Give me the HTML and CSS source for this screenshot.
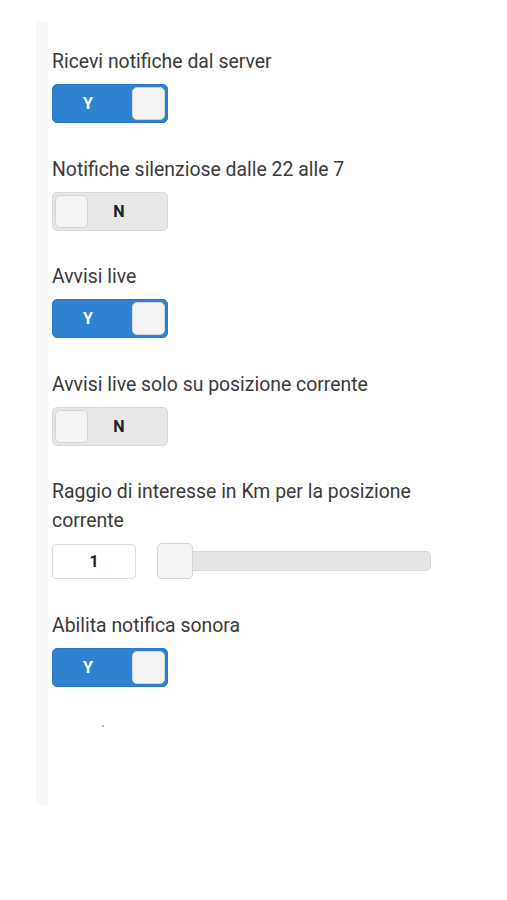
FILE: index.html
```html
<!DOCTYPE html>
<html lang="it">
<head>
<meta charset="utf-8">
<title>Impostazioni notifiche</title>
<link rel="stylesheet" href="styles.css">
</head>
<body>
<div class="page">
  <div class="rail"></div>
  <div class="content">
    <div class="field">
      <div class="label">Ricevi notifiche dal server</div>
      <div class="toggle on"><span class="txt">Y</span><span class="knob"></span></div>
    </div>
    <div class="field">
      <div class="label">Notifiche silenziose dalle 22 alle 7</div>
      <div class="toggle off"><span class="knob"></span><span class="txt">N</span></div>
    </div>
    <div class="field">
      <div class="label">Avvisi live</div>
      <div class="toggle on"><span class="txt">Y</span><span class="knob"></span></div>
    </div>
    <div class="field">
      <div class="label">Avvisi live solo su posizione corrente</div>
      <div class="toggle off"><span class="knob"></span><span class="txt">N</span></div>
    </div>
    <div class="field">
      <div class="label">Raggio di interesse in Km per la posizione corrente</div>
      <div class="range-row">
        <div class="num">1</div>
        <div class="slider"><div class="track"></div><div class="handle"></div></div>
      </div>
    </div>
    <div class="field">
      <div class="label">Abilita notifica sonora</div>
      <div class="toggle on"><span class="txt">Y</span><span class="knob"></span></div>
    </div>
    <div class="dot"></div>
  </div>
</div>
</body>
</html>
```
FILE: styles.css
```css
* { box-sizing: border-box; }
html, body { margin: 0; padding: 0; background: #fff; }
body { font-family: Roboto, "Noto Sans", sans-serif; color: #3a3a3a; }
.page { display: flex; padding: 22px 0 0 36px; }
.rail { width: 12px; height: 783px; background: #f7f7f7; flex: none; }
.content { padding: 25px 0 0 4px; width: 390px; }
.field { display: flex; flex-direction: column; align-items: flex-start; margin-bottom: 31.5px; }
.label { font-size: 19.4px; line-height: 29px; margin-bottom: 8px; width: 380px; }
.toggle { width: 116px; height: 39px; border-radius: 5px; display: flex; align-items: center; padding: 2px; font-weight: 700; font-size: 16px; }
.toggle.on { background: #2e82cf; border: 1px solid #2a76c0; color: #fff; }
.toggle.off { background: #e8e8e8; border: 1px solid #d8d8d8; color: #222; }
.knob { width: 33px; height: 33px; background: #f4f4f4; border: 1px solid #d4d4d4; border-radius: 5px; flex: none; }
.toggle.on .txt { width: 66px; text-align: center; margin-right: 11px; }
.toggle.off .txt { width: 62px; text-align: center; }
.range-row { display: flex; align-items: center; gap: 21px; }
.num { width: 84px; height: 35px; border: 1px solid #dcdcdc; border-radius: 4px; display: flex; align-items: center; justify-content: center; font-size: 16px; font-weight: 700; color: #222; }
.slider { position: relative; width: 274px; height: 36px; display: flex; align-items: center; }
.track { width: 100%; height: 20px; background: #e6e6e6; border: 1px solid #d8d8d8; border-radius: 5px; }
.handle { position: absolute; left: 0; top: 0; width: 36px; height: 36px; background: #f4f4f4; border: 1px solid #d6d6d6; border-radius: 5px; }
.dot { width: 2px; height: 2px; background: #aaa; border-radius: 1px; margin: 38px 0 0 50px; }
```
